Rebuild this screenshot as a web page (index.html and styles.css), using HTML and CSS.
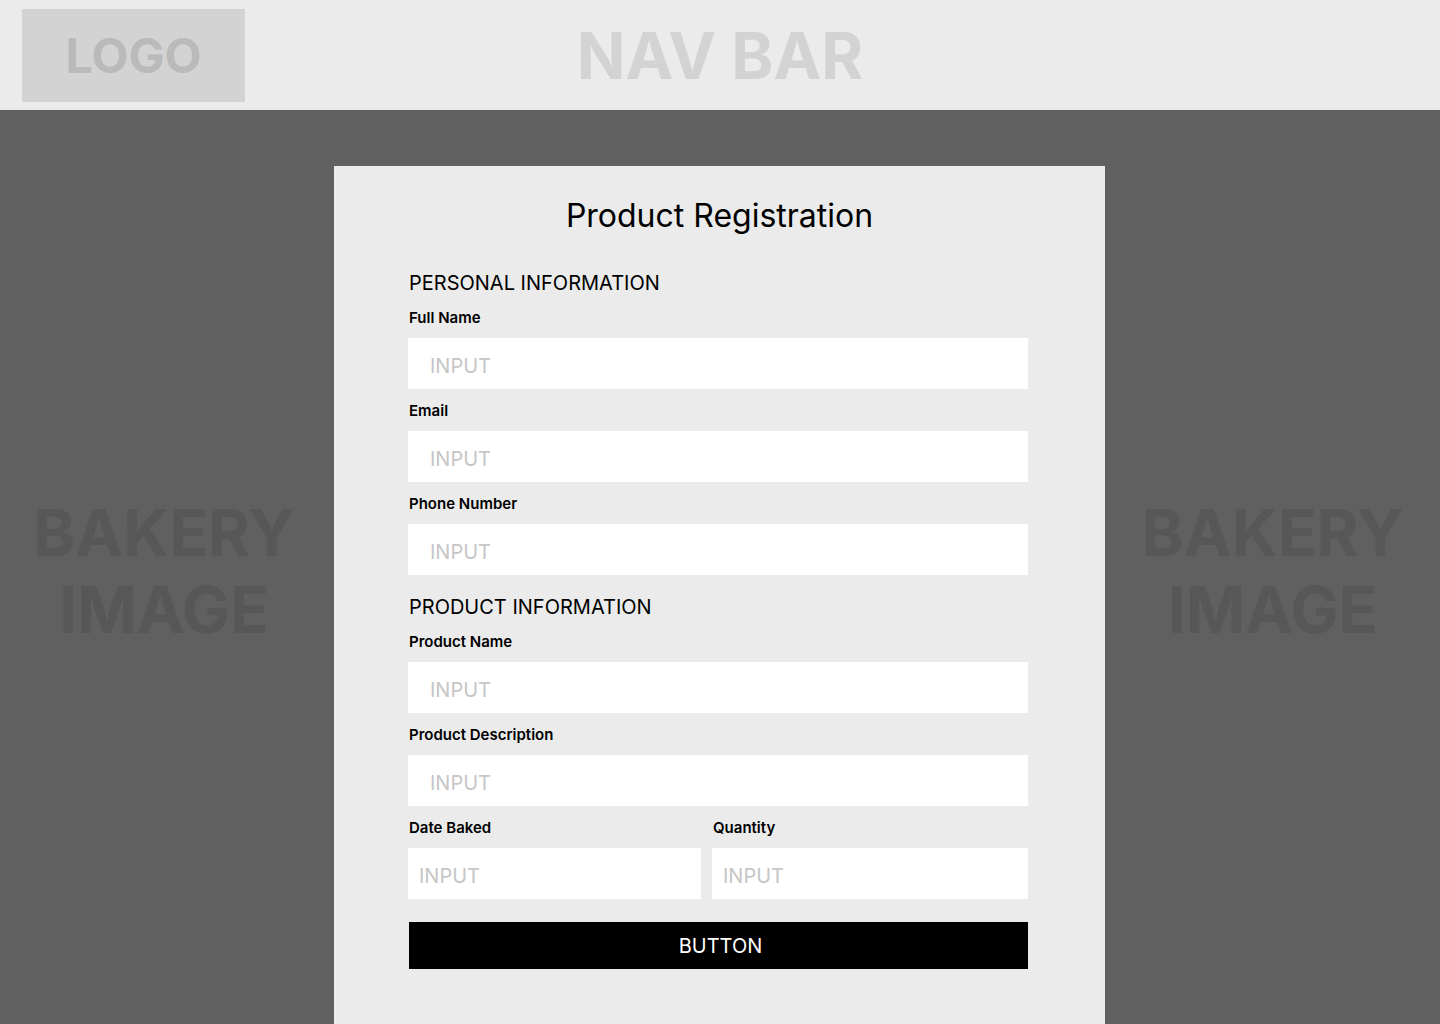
FILE: index.html
```html
<!DOCTYPE html>
<html lang="en">
<head>
<meta charset="utf-8">
<title>Product Registration</title>
<link rel="stylesheet" href="styles.css">
</head>
<body>
  <header class="nav">
    <div class="logo">LOGO</div>
    <div class="nav-title">NAV BAR</div>
    <div class="nav-spacer"></div>
  </header>
  <main class="main">
    <div class="side side-left"><span class="side-text">BAKERY<br>IMAGE</span></div>
    <section class="panel">
      <h1 class="title">Product Registration</h1>
      <form class="form">
        <h2 class="section">PERSONAL INFORMATION</h2>
        <div class="field">
          <label class="label">Full Name</label>
          <input class="input" type="text" placeholder="INPUT">
        </div>
        <div class="field">
          <label class="label">Email</label>
          <input class="input" type="text" placeholder="INPUT">
        </div>
        <div class="field">
          <label class="label">Phone Number</label>
          <input class="input" type="text" placeholder="INPUT">
        </div>
        <h2 class="section section-2">PRODUCT INFORMATION</h2>
        <div class="field">
          <label class="label">Product Name</label>
          <input class="input" type="text" placeholder="INPUT">
        </div>
        <div class="field">
          <label class="label">Product Description</label>
          <input class="input" type="text" placeholder="INPUT">
        </div>
        <div class="row">
          <div class="field">
            <label class="label">Date Baked</label>
            <input class="input input-small" type="text" placeholder="INPUT">
          </div>
          <div class="field">
            <label class="label">Quantity</label>
            <input class="input input-small" type="text" placeholder="INPUT">
          </div>
        </div>
        <button class="button" type="button">BUTTON</button>
      </form>
    </section>
    <div class="side"><span class="side-text">BAKERY<br>IMAGE</span></div>
  </main>
</body>
</html>
```
FILE: styles.css
```css
* { box-sizing: border-box; }
html, body {
  margin: 0;
  padding: 0;
  height: 1024px;
  overflow: hidden;
}
body {
  font-family: Inter, "Noto Sans", sans-serif;
  background: #606060;
  color: #000;
}
.nav {
  height: 110px;
  background: #ebebeb;
  display: grid;
  grid-template-columns: 1fr auto 1fr;
  align-items: center;
  padding: 0 0 0 22px;
}
.logo {
  width: 223px;
  height: 93px;
  margin-top: 1px;
  background: #d3d3d3;
  color: #bababa;
  font-weight: 700;
  font-size: 48px;
  display: flex;
  align-items: center;
  justify-content: center;
  justify-self: start;
}
.nav-title {
  font-weight: 700;
  font-size: 64px;
  line-height: 77px;
  color: #d3d3d3;
  margin-left: -22px;
  margin-top: 1px;
}
.main {
  height: 914px;
  display: grid;
  grid-template-columns: 334px 771px 1fr;
}
.side {
  display: flex;
  align-items: center;
  justify-content: center;
  padding-top: 8px;
}
.side-left {
  padding-right: 6px;
}
.side-text {
  font-weight: 700;
  font-size: 64px;
  line-height: 77px;
  color: #575757;
  text-align: center;
}
.panel {
  margin-top: 56px;
  background: #ebebeb;
  padding: 31px 77px 0 74px;
}
.title {
  margin: 0;
  font-weight: 400;
  font-size: 32px;
  line-height: 38px;
  text-align: center;
  padding-left: 3px;
}
.form {
  display: flex;
  flex-direction: column;
  margin-top: 36px;
}
.section {
  margin: 0 0 13px 1px;
  font-weight: 400;
  font-size: 20px;
  line-height: 24px;
}
.section-2 {
  margin-top: 8px;
}
.field {
  display: flex;
  flex-direction: column;
  margin-bottom: 12px;
}
.label {
  font-weight: 600;
  font-size: 15px;
  line-height: 18px;
  margin: 1px 0 11px 1px;
}
.input {
  height: 51px;
  border: none;
  outline: none;
  background: #fff;
  padding: 5px 22px 0;
  font-family: Inter, "Noto Sans", sans-serif;
  font-size: 20px;
  color: #000;
  width: 100%;
}
.input::placeholder {
  color: #c6c6c6;
}
.input-small {
  padding-left: 11px;
}
.row {
  display: grid;
  grid-template-columns: 293px 1fr;
  column-gap: 11px;
}
.row .field { margin-bottom: 0; }
.button {
  margin-top: 23px;
  margin-left: 1px;
  height: 47px;
  border: none;
  background: #000;
  color: #fff;
  font-family: Inter, "Noto Sans", sans-serif;
  font-size: 20px;
  font-weight: 400;
  padding: 0 0 0 4px;
  cursor: pointer;
}
```
